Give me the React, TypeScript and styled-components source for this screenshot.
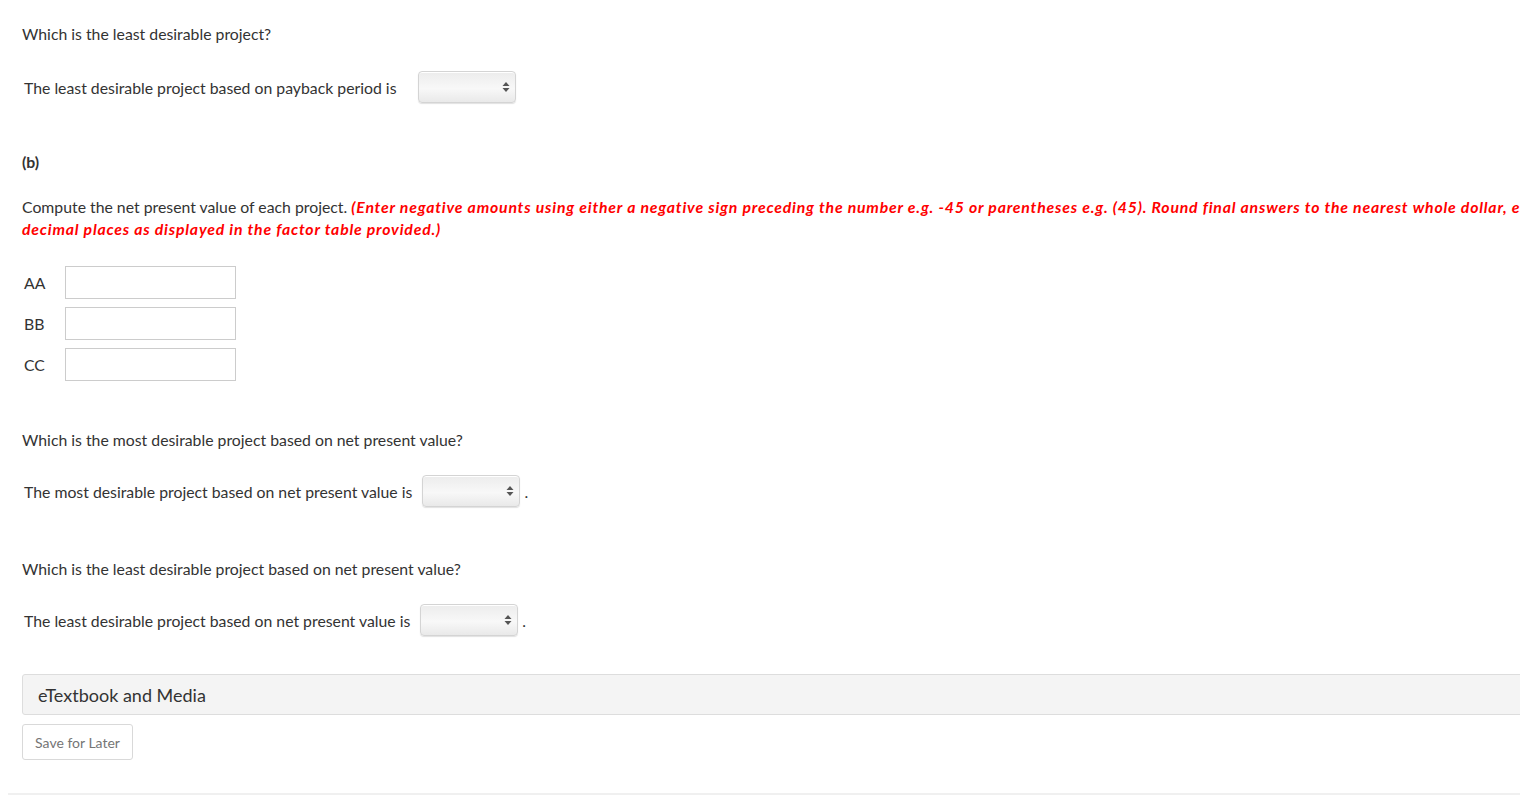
import React from "react";
import styled, { createGlobalStyle } from "styled-components";

const Global = createGlobalStyle`
  html, body { margin: 0; padding: 0; overflow: hidden; background: #fff; }
  body { font-family: Lato, "Open Sans", Arial, sans-serif; color: #333; font-size: 15.8px; }
`;

const Page = styled.div`
  width: 1700px;
  padding: 0 0 0 8px;
`;

const Content = styled.div`
  padding: 23px 0 0 14px;
`;

const Question = styled.p<{ $mt?: number }>`
  margin: ${(p) => p.$mt ?? 0}px 0 0;
  font-size: 15.8px;
  line-height: 22px;
`;

const AnswerRow = styled.div<{ $mt: number }>`
  display: flex;
  align-items: center;
  padding-left: 2px;
  height: 34px;
  margin-top: ${(p) => p.$mt}px;
  font-size: 15.8px;
`;

const SelectBox = styled.div<{ $ml: number }>`
  margin-left: ${(p) => p.$ml}px;
  width: 98px;
  height: 32px;
  box-sizing: border-box;
  border: 1px solid #d4d4d4;
  border-radius: 4px;
  background: linear-gradient(#ececec, #f8f8f8 55%, #e9e9e9);
  box-shadow: inset 0 1px 0 #fff, 0 1px 1px rgba(0,0,0,0.12);
  display: flex;
  align-items: center;
  justify-content: flex-end;
  padding-right: 5px;
`;

const Period = styled.span`
  margin-left: 4px;
`;

const PartLabel = styled.div`
  margin-top: 47px;
  font-weight: 700;
  font-size: 15.8px;
  line-height: 22px;
`;

const Instruction = styled.p`
  margin: 23px 0 0;
  font-size: 15.8px;
  line-height: 22px;
  white-space: nowrap;
`;

const Red = styled.strong`
  color: #ff0000;
  font-style: italic;
  font-weight: 700;
  letter-spacing: 0.8px;
`;

const InputGrid = styled.div`
  display: grid;
  grid-template-columns: 41px 171px;
  row-gap: 8px;
  margin-top: 26px;
  padding-left: 2px;
  align-items: center;
`;

const InputLabel = styled.span`
  font-size: 15.8px;
`;

const TextInput = styled.div`
  height: 33px;
  box-sizing: border-box;
  border: 1px solid #ccc;
  background: #fff;
`;

const MediaBar = styled.div`
  margin-top: 37px;
  height: 41px;
  box-sizing: border-box;
  border: 1px solid #ddd;
  border-radius: 3px 0 0 3px;
  background: #f4f4f4;
  display: flex;
  align-items: center;
  padding-left: 15px;
  font-size: 18px;
  color: #333;
`;

const SaveButton = styled.button`
  margin-top: 9px;
  height: 36px;
  width: 111px;
  box-sizing: border-box;
  border: 1px solid #d9d9d9;
  border-radius: 3px;
  background: #fff;
  font-family: Lato, Arial, sans-serif;
  font-size: 14px;
  color: #757575;
  padding: 0;
`;

const Rule = styled.hr`
  margin: 33px 0 0;
  border: 0;
  border-top: 2px solid #f0f0f0;
`;

const Arrows = () => (
  <svg width="8" height="12" viewBox="0 0 8 12">
    <path d="M4 1 L7.5 5 L0.5 5 Z" fill="#555" />
    <path d="M4 11 L7.5 7 L0.5 7 Z" fill="#555" />
  </svg>
);

export default function App() {
  return (
    <>
      <Global />
      <Page>
        <Content>
          <Question>Which is the least desirable project?</Question>
          <AnswerRow $mt={25}>
            The least desirable project based on payback period is
            <SelectBox $ml={21}><Arrows /></SelectBox>
          </AnswerRow>
          <PartLabel>(b)</PartLabel>
          <Instruction>
            Compute the net present value of each project.{" "}
            <Red>
              (Enter negative amounts using either a negative sign preceding the number e.g. -45 or parentheses e.g. (45). Round final answers to the nearest whole dollar, e.g. 5,275. For calculation purposes, use 5
            </Red>
            <br />
            <Red>decimal places as displayed in the factor table provided.)</Red>
          </Instruction>
          <InputGrid>
            <InputLabel>AA</InputLabel>
            <TextInput />
            <InputLabel>BB</InputLabel>
            <TextInput />
            <InputLabel>CC</InputLabel>
            <TextInput />
          </InputGrid>
          <Question $mt={48}>Which is the most desirable project based on net present value?</Question>
          <AnswerRow $mt={23}>
            The most desirable project based on net present value is
            <SelectBox $ml={10}><Arrows /></SelectBox>
            <Period>.</Period>
          </AnswerRow>
          <Question $mt={50}>Which is the least desirable project based on net present value?</Question>
          <AnswerRow $mt={23}>
            The least desirable project based on net present value is
            <SelectBox $ml={10}><Arrows /></SelectBox>
            <Period>.</Period>
          </AnswerRow>
          <MediaBar>eTextbook and Media</MediaBar>
          <SaveButton>Save for Later</SaveButton>
        </Content>
        <Rule />
      </Page>
    </>
  );
}
